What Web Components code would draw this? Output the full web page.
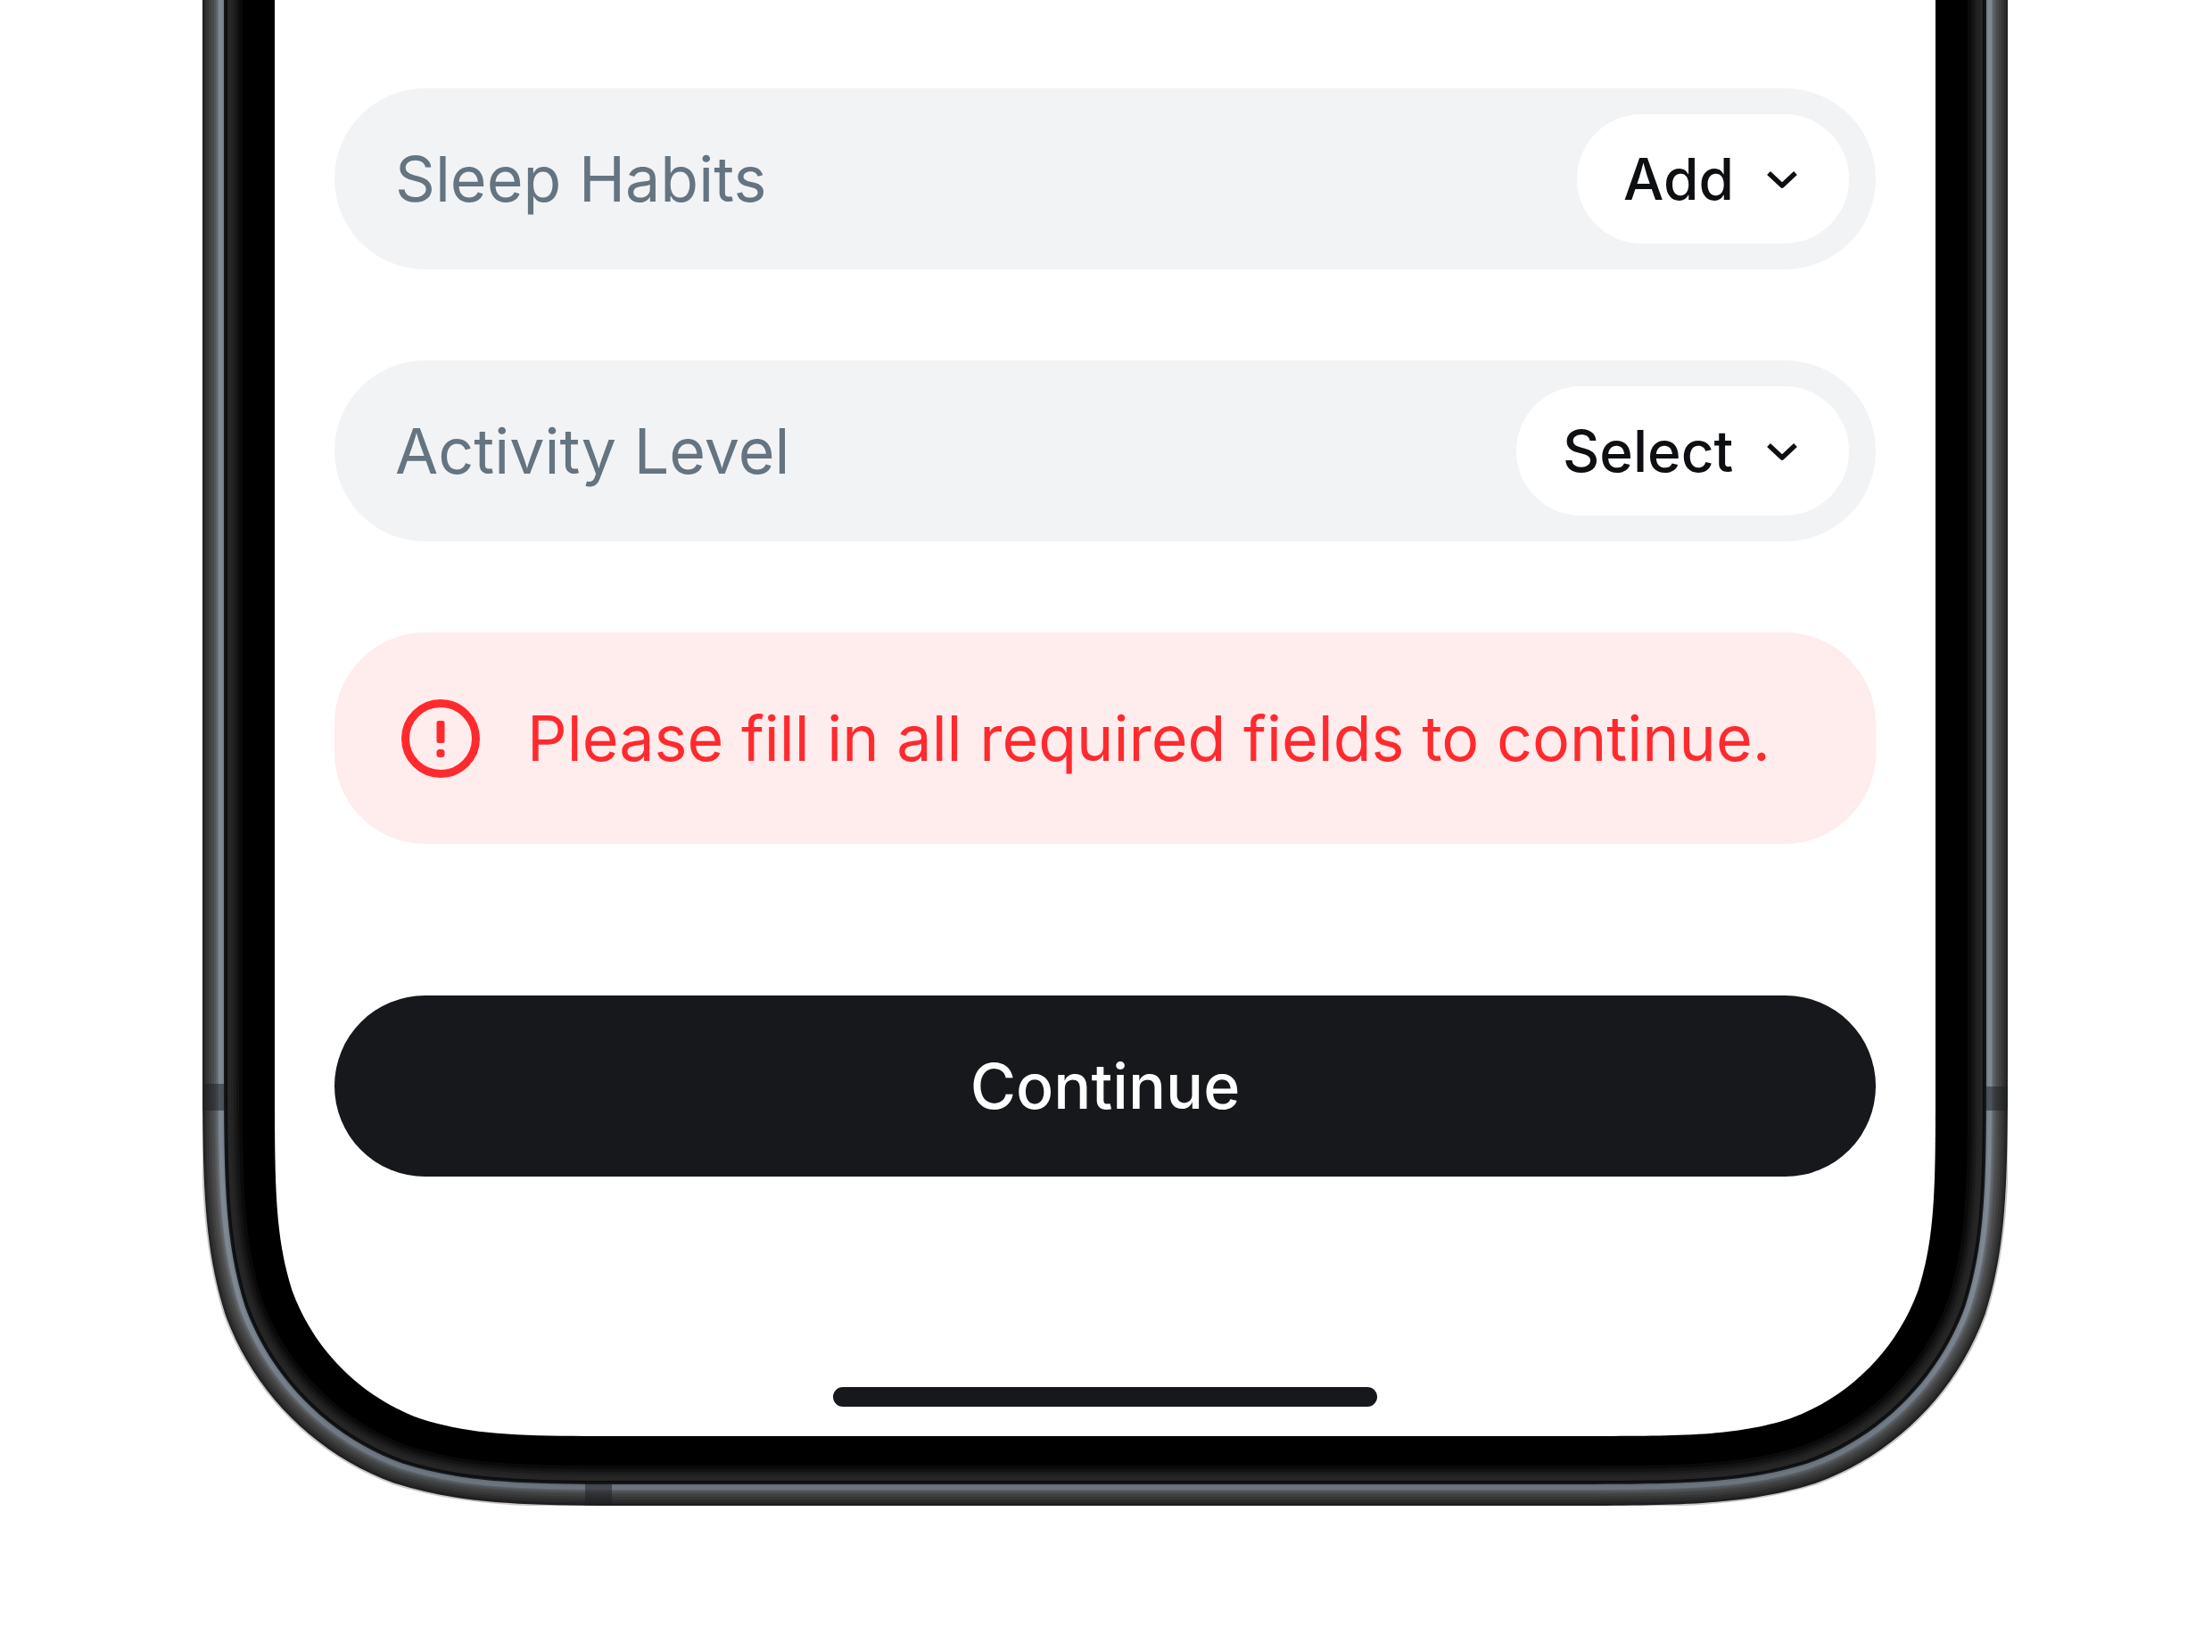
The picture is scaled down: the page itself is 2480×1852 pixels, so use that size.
<!DOCTYPE html>
<html lang="en">
<head>
<meta charset="utf-8">
<meta name="viewport" content="width=device-width, initial-scale=1">
<title>Health profile</title>
<style>
  body {
    margin: 0;
    padding-right: 2px;
    background: #fff;
    font-family: Inter, "Liberation Sans", sans-serif;
    color: #0d0f12;
  }
</style>
</head>
<body>
<phone-frame>
  <profile-form></profile-form>
</phone-frame>

<script>
/* Phone body: concentric smooth-cornered bands, with the screen on top. */
class PhoneFrame extends HTMLElement {
  connectedCallback() {
    const W = 2024, H = 1688, R = 340;
    const shape = (d, bottom = d) => {
      const r = R - d, l = d, t = W - d, b = H - bottom;
      const a = 1.528665 * r, c1 = 1.088493 * r, c2 = 0.868407 * r,
            p = 0.631494 * r, q = 0.074911 * r, m = 0.372824 * r, n = 0.16906 * r;
      return `M${l} -10V${b - a}C${l} ${b - c1} ${l} ${b - c2} ${l + q} ${b - p}` +
        `C${l + n} ${b - m} ${l + m} ${b - n} ${l + p} ${b - q}` +
        `C${l + c2} ${b} ${l + c1} ${b} ${l + a} ${b}H${t - a}` +
        `C${t - c1} ${b} ${t - c2} ${b} ${t - p} ${b - q}` +
        `C${t - m} ${b - n} ${t - n} ${b - m} ${t - q} ${b - p}` +
        `C${t} ${b - c2} ${t} ${b - c1} ${t} ${b - a}V-10Z`;
    };
    const band = ([d, c]) => `<path d="${shape(d)}" fill="${c}"/>`;
    const metal = [[0, '#222'], [2, '#2c2c2c'], [4, '#353535'], [7, '#404040'], [10, '#4a4b4b'],
      [13, '#555759'], [15, '#61656a'], [17, '#6f767d'], [18, '#7e8893'], [22, '#77818b']];
    const bezel = [[24, '#14171a'], [26, '#0c0d0e'], [28, '#262626'], [32, '#232323'], [35, '#1b1b1b'],
      [38, '#131313'], [41, '#0a0a0a'], [45, '#000']];
    this.attachShadow({ mode: 'open' }).innerHTML = `
      <style>
        :host { display: grid; width: 2024px; max-width: 100%; margin: 0 auto; }
        svg, .screen { grid-area: 1 / 1; }
        svg { display: block; width: 100%; height: auto; }
        .screen { box-sizing: border-box; padding: 99px 148px 0 148px; }
      </style>
      <svg viewBox="0 0 ${W} ${H}" aria-hidden="true">
        <defs>
          <linearGradient id="shade" gradientUnits="userSpaceOnUse" x1="0" y1="1450" x2="0" y2="1688">
            <stop offset="0" stop-opacity="0"/>
            <stop offset="1" stop-opacity=".16"/>
          </linearGradient>
        </defs>
        <path d="${shape(0)}" fill="none" stroke="#000" stroke-opacity=".22" stroke-width="4"/>
        ${metal.map(band).join('')}
        <path d="${shape(0)}" fill="url(#shade)"/>
        <g fill="#1c1e21" fill-opacity=".5">
          <rect x="0" y="1215" width="26" height="30"/>
          <rect x="1998" y="1218" width="26" height="27"/>
          <rect x="429" y="1662" width="30" height="26"/>
        </g>
        ${bezel.map(band).join('')}
        <path d="${shape(81, 78)}" fill="#fff"/>
      </svg>
      <div class="screen"><slot></slot></div>`;
  }
}

/* Grey pill: a label on the left, a drop-down in a white pill on the right. */
class SelectField extends HTMLElement {
  connectedCallback() {
    const label = this.getAttribute('label'), value = this.getAttribute('value');
    this.attachShadow({ mode: 'open' }).innerHTML = `
      <style>
        :host {
          display: flex; align-items: center; justify-content: space-between;
          box-sizing: border-box; height: 203px; padding: 0 30px 0 68px;
          border-radius: 102px; background: #f2f3f5;
        }
        label { font-size: 70px; line-height: 84px; color: #647480; }
        .pill {
          display: flex; align-items: center; gap: 31px; box-sizing: border-box;
          height: 145px; padding: 0 52px; border-radius: 73px; background: #fff;
        }
        select {
          appearance: none; border: 0; padding: 0; margin: 0; background: none;
          font: 500 64px/78px Inter, "Liberation Sans", sans-serif; color: #0d0f12;
        }
        svg { display: block; width: 46px; height: 46px; pointer-events: none; }
      </style>
      <label for="choice">${label}</label>
      <div class="pill">
        <select id="choice"><option>${value}</option></select>
        <svg viewBox="0 0 46 46" fill="none" stroke="#0d0f12" stroke-width="5.5" stroke-linejoin="round" aria-hidden="true">
          <path d="M8 16L23 30L38 16"/>
        </svg>
      </div>`;
  }
}

class AlertBanner extends HTMLElement {
  connectedCallback() {
    this.attachShadow({ mode: 'open' }).innerHTML = `
      <style>
        :host {
          display: flex; align-items: center; gap: 44px; box-sizing: border-box;
          height: 237px; padding: 0 66px; border-radius: 102px;
          background: #ffecec; color: #ff2a2e;
          font-size: 70px; line-height: 84px; white-space: nowrap;
        }
        svg { display: block; flex: none; width: 106px; height: 106px; }
      </style>
      <svg viewBox="0 0 106 106" aria-hidden="true">
        <circle cx="53" cy="53" r="39.5" fill="none" stroke="currentColor" stroke-width="9"/>
        <rect x="48.5" y="33" width="9" height="25" rx="2.5" fill="currentColor"/>
        <rect x="48.5" y="65" width="9" height="9" rx="3.5" fill="currentColor"/>
      </svg>
      <span role="alert"><slot></slot></span>`;
  }
}

class PrimaryButton extends HTMLElement {
  connectedCallback() {
    this.attachShadow({ mode: 'open' }).innerHTML = `
      <style>
        :host { display: block; }
        button {
          display: block; width: 100%; height: 203px; border: 0; padding: 0;
          border-radius: 102px; background: #16181c; color: #fff;
          font: 500 70px/84px Inter, "Liberation Sans", sans-serif;
        }
      </style>
      <button type="button"><slot></slot></button>`;
  }
}

class HomeIndicator extends HTMLElement {
  connectedCallback() {
    this.attachShadow({ mode: 'open' }).innerHTML = `
      <style>
        :host { display: block; width: 610px; height: 22px; border-radius: 11px; background: #16181c; }
      </style>`;
  }
}

class ProfileForm extends HTMLElement {
  connectedCallback() {
    this.attachShadow({ mode: 'open' }).innerHTML = `
      <style>
        :host { display: block; }
        .fields { display: flex; flex-direction: column; gap: 102px; }
        primary-button { margin-top: 170px; }
        home-indicator { margin: 236px auto 0; }
      </style>
      <div class="fields">
        <select-field label="Sleep Habits" value="Add"></select-field>
        <select-field label="Activity Level" value="Select"></select-field>
        <alert-banner>Please fill in all required fields to continue.</alert-banner>
      </div>
      <primary-button>Continue</primary-button>
      <home-indicator></home-indicator>`;
  }
}

customElements.define('phone-frame', PhoneFrame);
customElements.define('select-field', SelectField);
customElements.define('alert-banner', AlertBanner);
customElements.define('primary-button', PrimaryButton);
customElements.define('home-indicator', HomeIndicator);
customElements.define('profile-form', ProfileForm);
</script>
</body>
</html>
